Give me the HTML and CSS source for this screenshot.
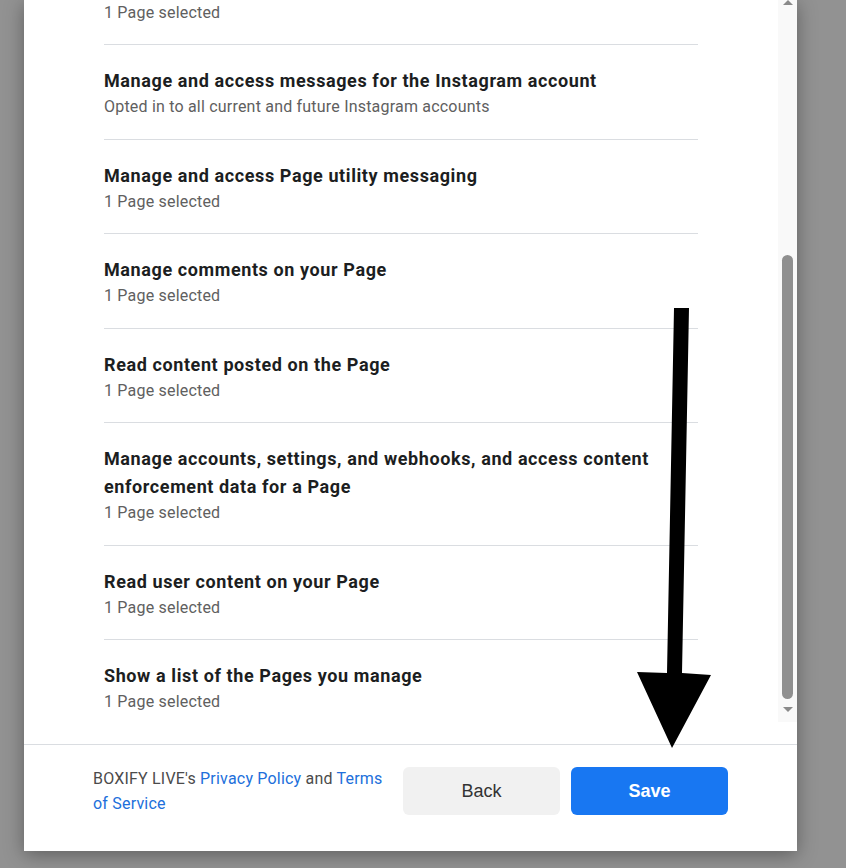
FILE: index.html
```html
<!DOCTYPE html>
<html lang="en">
<head>
    <meta charset="UTF-8">
    <meta name="viewport" content="width=device-width, initial-scale=1.0">
    <title>Edit permissions</title>
    <link rel="stylesheet" href="styles.css">
</head>
<body>
    <div class="dialog">
        <div class="dialog-body">
            <div class="permissions">
                <div class="permission">
                    <div class="perm-title">Manage and access Page conversations in Messenger</div>
                    <div class="perm-sub">1 Page selected</div>
                </div>
                <div class="permission">
                    <div class="perm-title">Manage and access messages for the Instagram account</div>
                    <div class="perm-sub">Opted in to all current and future Instagram accounts</div>
                </div>
                <div class="permission">
                    <div class="perm-title">Manage and access Page utility messaging</div>
                    <div class="perm-sub">1 Page selected</div>
                </div>
                <div class="permission">
                    <div class="perm-title">Manage comments on your Page</div>
                    <div class="perm-sub">1 Page selected</div>
                </div>
                <div class="permission">
                    <div class="perm-title">Read content posted on the Page</div>
                    <div class="perm-sub">1 Page selected</div>
                </div>
                <div class="permission">
                    <div class="perm-title">Manage accounts, settings, and webhooks, and access content enforcement data for a Page</div>
                    <div class="perm-sub">1 Page selected</div>
                </div>
                <div class="permission">
                    <div class="perm-title">Read user content on your Page</div>
                    <div class="perm-sub">1 Page selected</div>
                </div>
                <div class="permission">
                    <div class="perm-title">Show a list of the Pages you manage</div>
                    <div class="perm-sub">1 Page selected</div>
                </div>
            </div>

            <div class="scrollbar">
                <span class="scroll-up"></span>
                <span class="scroll-thumb"></span>
                <span class="scroll-down"></span>
            </div>
        </div>

        <div class="dialog-footer">
            <p class="legal">BOXIFY LIVE's <a href="#">Privacy Policy</a> and <a href="#">Terms of Service</a></p>
            <button class="btn btn-back">Back</button>
            <button class="btn btn-save">Save</button>
        </div>
    </div>

    <!-- annotation arrow drawn over the screenshot -->
    <svg class="annotation" width="846" height="868" viewBox="0 0 846 868">
        <polygon points="674,308 689,308 682,673 711,675 672,748 637,672 667,673" fill="#000"/>
    </svg>
</body>
</html>
```

FILE: styles.css
```css
*{
  margin: 0;
  padding: 0;
  box-sizing: border-box;
}

body{
  height: 868px;
  overflow: hidden;
  background-color: #929292;
  font-family: Roboto, "Liberation Sans", Arial, sans-serif;
}

.dialog{
  width: 773px;
  height: 851px;
  margin-left: 24px;
  background-color: #fff;
  box-shadow: 0 4px 18px rgba(0, 0, 0, 0.35);
  display: flex;
  flex-direction: column;
}

.dialog-body{
  flex: 1;
  display: flex;
  overflow: hidden;
}

/* list is scrolled to its end, so overflow sits above the top edge */
.permissions{
  flex: 1;
  display: flex;
  flex-direction: column;
  justify-content: flex-end;
  overflow: hidden;
  padding: 0 80px 10.5px;
}

.permission{
  flex-shrink: 0;
  padding: 22px 0 19.5px;
  border-bottom: 1px solid #dadde1;
}

.permission:last-child{
  border-bottom: none;
}

.perm-title{
  font-size: 18px;
  font-weight: 700;
  line-height: 28px;
  letter-spacing: 0.6px;
  color: #1c1e21;
}

.perm-sub{
  font-size: 16px;
  line-height: 24px;
  letter-spacing: 0.2px;
  color: #606060;
}

.scrollbar{
  width: 19px;
  margin-bottom: 22px;
  background-color: #f9f9f9;
  display: flex;
  flex-direction: column;
  align-items: center;
}

.scroll-up{
  width: 0;
  height: 0;
  border-left: 5px solid transparent;
  border-right: 5px solid transparent;
  border-bottom: 5px solid #8a8a8a;
}

.scroll-thumb{
  width: 11px;
  height: 444px;
  margin-top: auto;
  border-radius: 6px;
  background-color: #8f8f8f;
}

.scroll-down{
  width: 0;
  height: 0;
  margin: 8px 0 10px;
  border-left: 5px solid transparent;
  border-right: 5px solid transparent;
  border-top: 5px solid #8a8a8a;
}

.dialog-footer{
  border-top: 1px solid #dadde1;
  padding: 21px 69px 35px;
  display: flex;
  align-items: center;
  gap: 11px;
}

.legal{
  width: 294px;
  margin-right: 5px;
  font-size: 16px;
  line-height: 25px;
  letter-spacing: 0.2px;
  color: #4b4b4b;
}

.legal a{
  color: #216fdb;
  text-decoration: none;
}

.btn{
  width: 157px;
  height: 48px;
  border: none;
  border-radius: 6px;
  font-family: "Liberation Sans", Arial, sans-serif;
  font-size: 18px;
  cursor: pointer;
}

.btn-back{
  background-color: #f1f1f1;
  color: #333;
}

.btn-save{
  background-color: #1877f2;
  color: #fff;
  font-weight: 700;
}

.annotation{
  position: absolute;
  top: 0;
  left: 0;
  pointer-events: none;
}
```
